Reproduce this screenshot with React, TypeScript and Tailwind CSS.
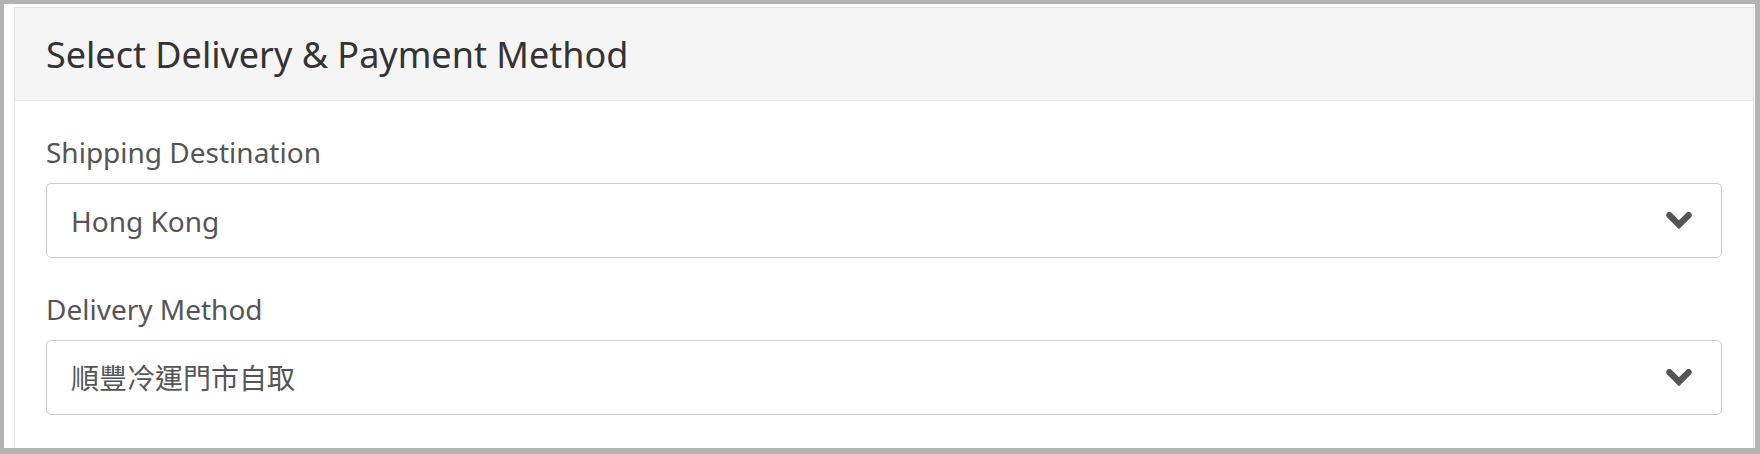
import type { ReactNode } from 'react';

const fontStack = '"Noto Sans", "Noto Sans CJK TC", sans-serif';

function ChevronDown() {
  return (
    <svg width="26" height="18" viewBox="1 1 24 17" className="shrink-0" aria-hidden="true">
      <polyline
        points="4,4 13,13 22,4"
        fill="none"
        stroke="#555555"
        strokeWidth="6"
        strokeLinecap="round"
        strokeLinejoin="miter"
      />
    </svg>
  );
}

interface SelectFieldProps {
  label: string;
  children: ReactNode;
}

function SelectField({ label, children }: SelectFieldProps) {
  return (
    <div>
      <label className="mb-[10px] block text-[28px] leading-[42px] text-[#555]">{label}</label>
      <div className="flex h-[75px] items-center justify-between rounded-[5px] border border-[#cccccc] bg-white pl-[24px] pr-[29px]">
        <span className="pt-px text-[28px] leading-[42px] text-[#555]">{children}</span>
        <ChevronDown />
      </div>
    </div>
  );
}

export default function App() {
  return (
    <div
      className="box-border h-[454px] w-full overflow-hidden border-t-4 border-r-[5px] border-b-[6px] border-l-4 border-[#b3b3b3] bg-white"
      style={{ fontFamily: fontStack }}
    >
      <div className="mt-[3px] mr-px ml-[10px] border border-[#e3e3e3] bg-white">
        <div className="flex h-[93px] items-center border-b border-[#eaeaea] bg-[#f5f5f5] px-[31px] pt-[2px]">
          <h3 className="text-[36px] leading-[48px] text-[#333]">Select Delivery &amp; Payment Method</h3>
        </div>
        <div className="flex flex-col gap-[30px] px-[31px] pt-[30px] pb-[34px]">
          <SelectField label="Shipping Destination">Hong Kong</SelectField>
          <SelectField label="Delivery Method">順豐冷運門市自取</SelectField>
        </div>
      </div>
    </div>
  );
}
